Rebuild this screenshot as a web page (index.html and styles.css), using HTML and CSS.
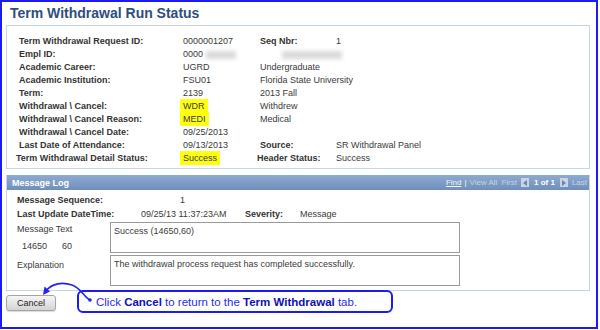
FILE: index.html
```html
<!DOCTYPE html>
<html lang="en">
<head>
    <meta charset="UTF-8">
    <meta name="viewport" content="width=device-width, initial-scale=1.0">
    <title>Term Withdrawal Run Status</title>
    <link rel="stylesheet" href="styles.css">
</head>
<body>

<div class="frame">
    <h1 class="pageTitle">Term Withdrawal Run Status</h1>

    <div class="infoBox">
        <div class="infoGrid">
            <div class="lbl">Term Withdrawal Request ID:</div>
            <div class="val">0000001207</div>
            <div class="lbl">Seq Nbr:</div>
            <div class="val">1</div>

            <div class="lbl">Empl ID:</div>
            <div class="val">0000<span class="blur blurShort"></span></div>
            <div class="val wide"><span class="blur blurLong"></span></div>

            <div class="lbl">Academic Career:</div>
            <div class="val">UGRD</div>
            <div class="val wide">Undergraduate</div>

            <div class="lbl">Academic Institution:</div>
            <div class="val">FSU01</div>
            <div class="val wide">Florida State University</div>

            <div class="lbl">Term:</div>
            <div class="val">2139</div>
            <div class="val wide">2013 Fall</div>

            <div class="lbl">Withdrawal \ Cancel:</div>
            <div class="val"><span class="hl">WDR</span></div>
            <div class="val wide">Withdrew</div>

            <div class="lbl">Withdrawal \ Cancel Reason:</div>
            <div class="val"><span class="hl">MEDI</span></div>
            <div class="val wide">Medical</div>

            <div class="lbl">Withdrawal \ Cancel Date:</div>
            <div class="val">09/25/2013</div>
            <div class="val wide"></div>

            <div class="lbl">Last Date of Attendance:</div>
            <div class="val">09/13/2013</div>
            <div class="lbl">Source:</div>
            <div class="val">SR Withdrawal Panel</div>

            <div class="lbl shift">Term Withdrawal Detail Status:</div>
            <div class="val"><span class="hl">Success</span></div>
            <div class="lbl shift">Header Status:</div>
            <div class="val">Success</div>
        </div>
    </div>

    <div class="logBox">
        <div class="logHeader">
            <span class="logTitle">Message Log</span>
            <span class="logNav">
                <span class="navLink">Find</span>
                <span class="navSep">|</span>
                <span class="navOff">View All</span>
                <span class="navOff">First</span>
                <span class="navBtn"><i class="triLeft"></i></span>
                <span class="navCount">1 of 1</span>
                <span class="navBtn"><i class="triRight"></i></span>
                <span class="navOff">Last</span>
            </span>
        </div>
        <div class="logBody">
            <div class="logRow">
                <span class="lbl seqLbl">Message Sequence:</span>
                <span class="val">1</span>
            </div>
            <div class="logRow">
                <span class="lbl dateLbl">Last Update DateTime:</span>
                <span class="val dateVal">09/25/13 11:37:23AM</span>
                <span class="lbl sevLbl">Severity:</span>
                <span class="val">Message</span>
            </div>
            <div class="msgGrid">
                <div class="msgSide">
                    <div class="val">Message Text</div>
                    <div class="val setNums"><span>14650</span><span>60</span></div>
                </div>
                <div class="msgArea">Success (14650,60)</div>
                <div class="msgSide">
                    <div class="val explain">Explanation</div>
                </div>
                <div class="msgArea">The withdrawal process request has completed successfully.</div>
            </div>
        </div>
    </div>

    <div class="bottomRow">
        <button class="btnCancel">Cancel</button>
        <div class="callout">Click <b>Cancel</b> to return to the <b>Term Withdrawal</b> tab.</div>
        <svg class="pointer" width="60" height="30" viewBox="36 280 60 30">
            <path d="M90,300 C84,297 81,288 72,285 C63,282 52,283 46,291" fill="none" stroke="#2424f0" stroke-width="1.6"/>
            <circle cx="90" cy="300" r="1.8" fill="#2424f0"/>
            <polygon points="43,295 44.5,286.5 50,291.5" fill="#2424f0"/>
        </svg>
    </div>
</div>

</body>
</html>
```

FILE: styles.css
```css
body {
    margin: 0;
    padding: 0;
    font-family: 'Liberation Sans', Arial, sans-serif;
    background-color: #fff;
    color: #333;
}

.frame {
    width: 598px;
    height: 329px;
    box-sizing: border-box;
    border: 2px solid #1a1af5;
    padding: 0 6px 0 4px;
}

.pageTitle {
    margin: 0;
    padding-left: 4px;
    height: 23px;
    line-height: 22px;
    font-size: 14px;
    font-weight: bold;
    color: #2e4e7e;
}

.infoBox {
    border: 1px solid #c6d5e7;
    height: 144px;
    box-sizing: border-box;
    padding: 9px 0 0 12px;
}

.infoGrid {
    display: grid;
    grid-template-columns: 164px 77px 76px auto;
    grid-auto-rows: 13px;
    font-size: 9px;
    line-height: 13px;
}

.lbl {
    font-weight: bold;
    color: #333;
}

.val {
    color: #3a3a3a;
}

.wide {
    grid-column: span 2;
}

.shift {
    margin-left: -3px;
}

.hl {
    background-color: #ffff10;
    padding: 2px 3px;
    margin-left: -3px;
}

.blur {
    display: inline-block;
    height: 8px;
    background-color: #d9d9d9;
    filter: blur(2px);
    vertical-align: middle;
}

.blurShort {
    width: 30px;
    margin-left: 3px;
}

.blurLong {
    width: 60px;
    margin-left: 22px;
}

.logBox {
    margin-top: 6px;
    border: 1px solid #c6d5e7;
    border-top: none;
    height: 116px;
    box-sizing: border-box;
}

.logHeader {
    height: 15px;
    display: flex;
    justify-content: space-between;
    align-items: center;
    background: linear-gradient(#8eaad0, #6f8fbb);
    padding: 0 2px 0 5px;
    font-size: 9px;
}

.logTitle {
    color: #fff;
    font-weight: bold;
}

.logNav {
    display: flex;
    align-items: center;
    gap: 4px;
    font-size: 8px;
}

.navLink {
    color: #f2f6fb;
    text-decoration: underline;
}

.navSep {
    color: #fff;
    margin: 0 -1px;
}

.navOff {
    color: #c4d3e6;
}

.navCount {
    color: #fff;
    font-weight: bold;
    margin: 0 1px;
}

.navBtn {
    width: 8px;
    height: 9px;
    background-color: #c7d4e4;
    display: flex;
    align-items: center;
    justify-content: center;
}

.triLeft, .triRight {
    width: 0;
    height: 0;
    border-top: 3px solid transparent;
    border-bottom: 3px solid transparent;
}

.triLeft {
    border-right: 4px solid #6a86b0;
}

.triRight {
    border-left: 4px solid #6a86b0;
}

.logBody {
    padding: 3px 0 0 10px;
    font-size: 9px;
}

.logRow {
    display: flex;
    height: 14px;
    line-height: 14px;
}

.seqLbl {
    width: 163px;
}

.dateLbl {
    width: 124px;
}

.dateVal {
    width: 104px;
}

.sevLbl {
    width: 55px;
}

.msgGrid {
    margin-top: 1px;
    display: grid;
    grid-template-columns: 93px 350px;
    grid-template-rows: 31px 31px;
    row-gap: 2px;
}

.msgSide {
    line-height: 13px;
    padding-top: 1px;
}

.setNums {
    display: flex;
    gap: 15px;
    padding: 4px 0 0 5px;
}

.explain {
    padding-top: 3px;
}

.msgArea {
    border: 1px solid #9a9a9a;
    box-sizing: border-box;
    padding: 2px 3px;
    line-height: 13px;
    color: #3a3a3a;
}

.bottomRow {
    position: relative;
    display: flex;
    align-items: flex-start;
    margin-top: -1px;
}

.btnCancel {
    margin-top: 5px;
    width: 50px;
    height: 16px;
    padding: 0;
    font-family: 'Liberation Sans', Arial, sans-serif;
    font-size: 9px;
    color: #222;
    background: linear-gradient(#f6f6f6, #d4d4d4);
    border: 1px solid #a5a5a5;
    border-radius: 3px;
    box-shadow: 0 1px 1px rgba(0, 0, 0, 0.15);
}

.callout {
    margin-left: 21px;
    width: 316px;
    height: 23px;
    box-sizing: border-box;
    border: 2px solid #1c1cf2;
    border-radius: 6px;
    padding-left: 17px;
    line-height: 20px;
    font-size: 11.5px;
    color: #2a2aee;
}

.callout b {
    color: #1010b8;
}

.pointer {
    position: absolute;
    left: 30px;
    top: -10px;
}
```
